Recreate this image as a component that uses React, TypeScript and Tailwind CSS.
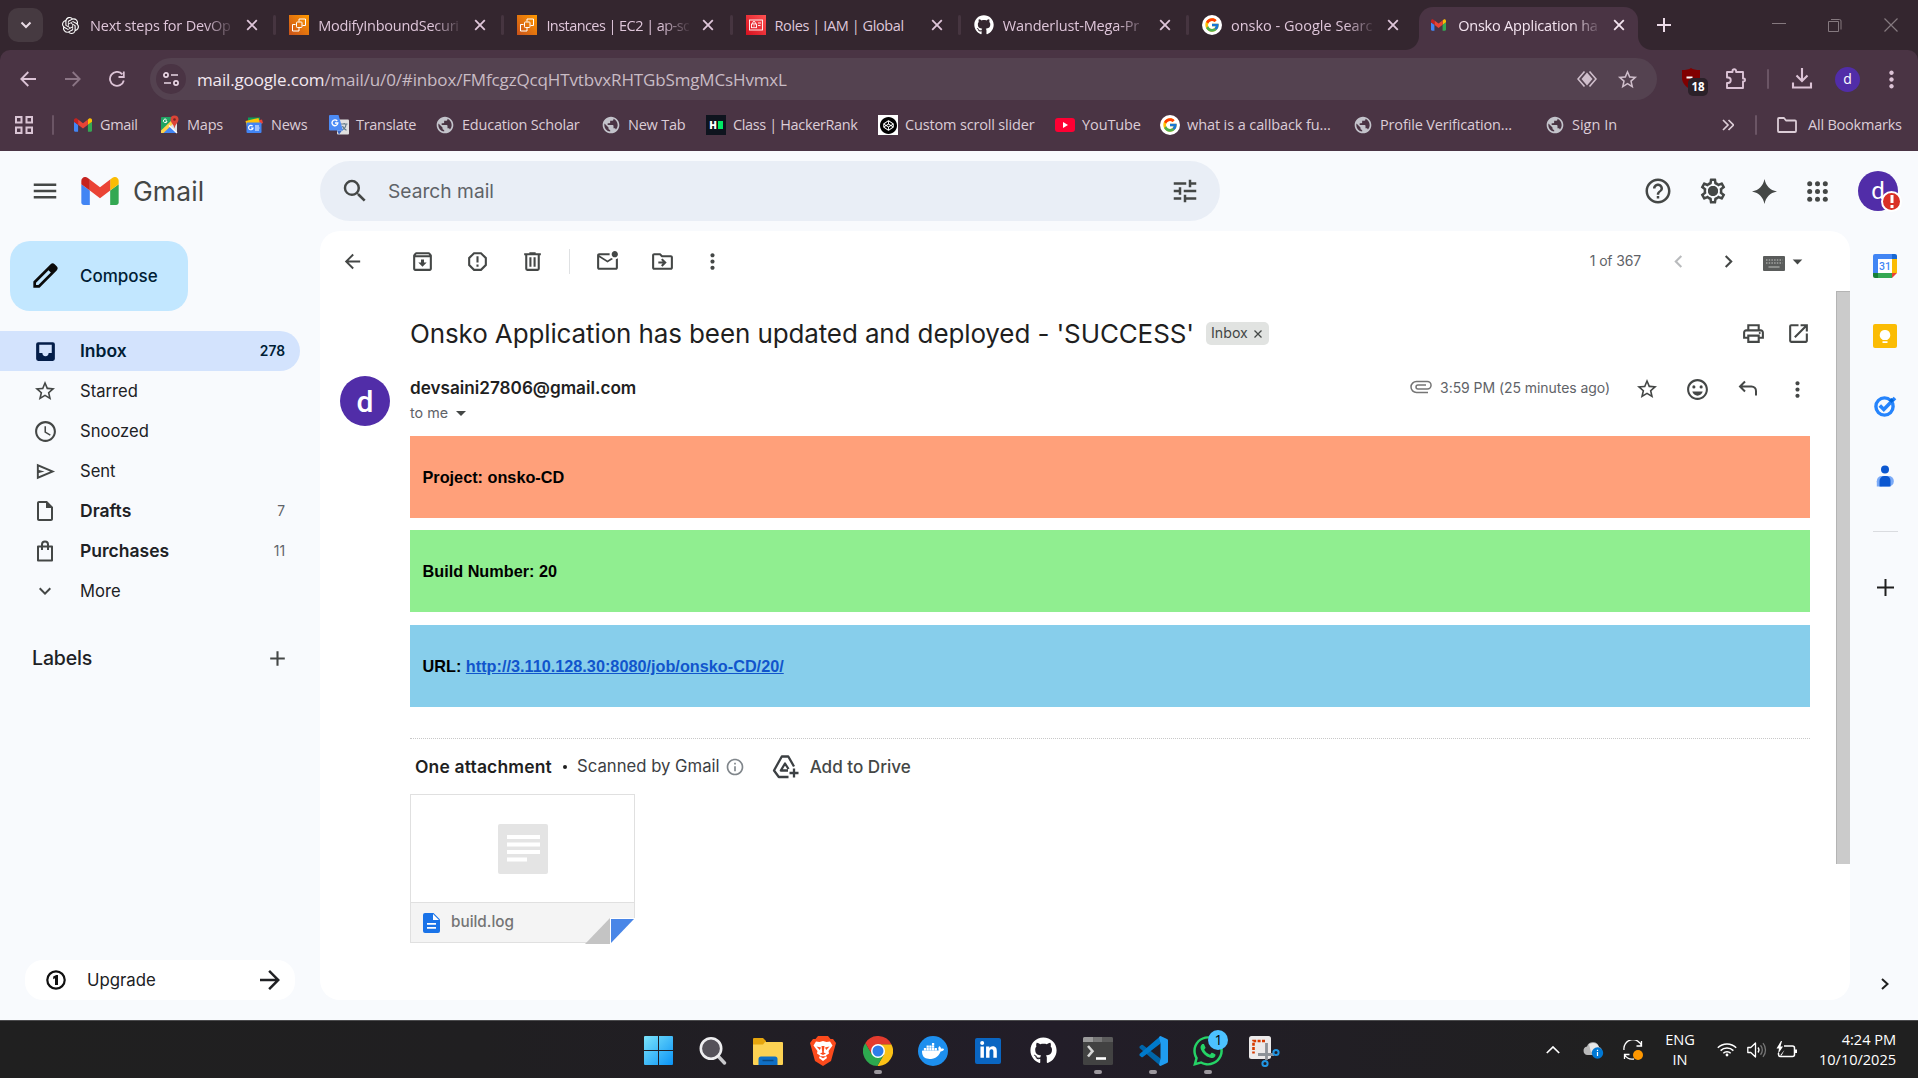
import React, { type ReactNode } from "react";
import { FcGoogle } from "react-icons/fc";
import { FaGithub, FaLinkedinIn, FaWhatsapp } from "react-icons/fa";
import { SiOpenai, SiCodepen, SiDocker } from "react-icons/si";
import {
  MdAccessTime, MdAdd, MdArrowBack, MdArrowDropDown, MdArrowForward, MdChevronLeft, MdChevronRight,
  MdExpandMore, MdHelpOutline, MdInfoOutline, MdMenu, MdMoreVert, MdOpenInNew,
  MdOutlineArchive, MdOutlineDriveFileMove, MdOutlineEmojiEmotions, MdOutlineInsertDriveFile,
  MdOutlineLocalPrintshop, MdOutlineMarkEmailUnread, MdOutlineSettings, MdPublic,
  MdReportGmailerrorred, MdSearch, MdStarOutline, MdTune,
} from "react-icons/md";

/* ---------- logos ---------- */

function GmailMark({ className }: { className?: string }) {
  return (
    <svg viewBox="52 42 88 66" className={className}>
      <path fill="#4285f4" d="M58 108h14V74L52 59v43c0 3.32 2.69 6 6 6" />
      <path fill="#34a853" d="M120 108h14c3.32 0 6-2.69 6-6V59l-20 15" />
      <path fill="#fbbc04" d="M120 48v26l20-15v-8c0-7.42-8.47-11.65-14.4-7.2" />
      <path fill="#ea4335" d="M72 74V48l24 18 24-18v26L96 92" />
      <path fill="#c5221f" d="M52 51v8l20 15V48l-5.6-4.2c-5.94-4.45-14.4-.22-14.4 7.2" />
    </svg>
  );
}

function ChromeMark({ className }: { className?: string }) {
  return (
    <svg viewBox="0 0 24 24" className={className}>
      <path fill="#fbc116" d="M12 6.5H22.67A12 12 0 0 1 11.43 24L16.76 14.75 12 12Z" />
      <path fill="#2da94f" d="M16.76 14.75 11.43 24A12 12 0 0 1 1.9 5.51L7.24 14.75 12 12Z" />
      <path fill="#e33b2e" d="M7.24 14.75 1.9 5.51A12 12 0 0 1 22.67 6.5H12V12Z" />
      <circle cx="12" cy="12" r="5.6" fill="#fff" />
      <circle cx="12" cy="12" r="4.4" fill="#2f7de9" />
    </svg>
  );
}

function Ec2Mark() {
  return (
    <svg viewBox="0 0 20 20" className="size-5">
      <defs>
        <linearGradient id="ec2" x1="0" y1="1" x2="1" y2="0">
          <stop offset="0" stopColor="#c8511b" />
          <stop offset="1" stopColor="#ff9900" />
        </linearGradient>
      </defs>
      <rect width="20" height="20" fill="url(#ec2)" />
      <g fill="none" stroke="#fff" strokeWidth="1">
        <rect x="7.5" y="7" width="5.5" height="5.5" rx=".8" />
        <path d="M10 6.5V4h6.5v6.5H13.5M6.5 9.5H3.500V16H10V13" />
      </g>
    </svg>
  );
}

function IamMark() {
  return (
    <svg viewBox="0 0 20 20" className="size-5">
      <defs>
        <linearGradient id="iam" x1="0" y1="1" x2="1" y2="0">
          <stop offset="0" stopColor="#d6101f" />
          <stop offset="1" stopColor="#ff5252" />
        </linearGradient>
      </defs>
      <rect width="20" height="20" fill="url(#iam)" />
      <g fill="none" stroke="#fff" strokeWidth=".9">
        <rect x="3.5" y="5" width="13" height="10" />
        <rect x="5.500" y="9" width="5" height="3.700" />
        <path d="M6.700 9V7.800a1.300 1.300 0 0 1 2.600 0V9M8 10.300v1.200M12 8h3M12 10.500h2.500" />
      </g>
    </svg>
  );
}

function GoogleDisc() {
  return (
    <span className="flex size-5 items-center justify-center rounded-full bg-white">
      <FcGoogle className="size-4" />
    </span>
  );
}

function MapsMark() {
  return (
    <svg viewBox="0 0 20 20" className="size-5">
      <rect x="1" y="2" width="16" height="16" rx="1" fill="#1fa463" />
      <path fill="#4285f4" d="M3 18 10 11l7 7Z" />
      <path fill="#dfe3e6" d="M17 6v12L9.500 10.500Z" />
      <path fill="#ffd04b" d="M1 15.500 14 3l2.500 2.500L3.500 18H1Z" />
      <path stroke="#fff" strokeWidth="1.200" d="M9 10.500 17 18" />
      <path fill="#db4437" d="M14.500.5a4 4 0 0 1 4 4c0 3-3.200 4.500-4 9-.8-4.500-4-6-4-9a4 4 0 0 1 4-4Z" />
      <circle cx="14.500" cy="4.500" r="1.300" fill="#7b231e" />
      <path fill="none" stroke="#fff" strokeWidth="1" d="M6.500 4.600A1.800 1.800 0 1 0 7 6H5.500" />
    </svg>
  );
}

function NewsMark() {
  return (
    <svg viewBox="0 0 20 20" className="size-5">
      <path fill="#0c9d58" d="M4 2.500h12V10H4Z" />
      <path fill="#ea4335" d="m11 6 7-1.500 1 3.500-6 3Z" />
      <path fill="#ffc107" d="m1.500 6 13-3 1.500 6-13 3Z" />
      <rect x="2.500" y="7.500" width="15" height="10.500" rx="1" fill="#4285f4" />
      <path fill="none" stroke="#fff" strokeWidth="1.200" d="M8.600 11.200A2.200 2.200 0 1 0 9 13H7M11 11h4M11 13h4.500M11 15h4" />
    </svg>
  );
}

function TranslateMark() {
  return (
    <svg viewBox="0 0 20 20" className="size-5">
      <rect x="8" y="4.500" width="12" height="15" rx="1" fill="#e0e0e0" />
      <path fill="none" stroke="#607988" strokeWidth="1.200" d="M12 9h6.500M15.200 8v1.500M17 9c0 3-2 5-4 6M13.500 11c.5 2 2.500 3.500 4 4.200" />
      <path fill="#3a66c4" d="m8 15.500 5 0L10 19.500Z" />
      <path fill="#4c8bf5" d="M1 0h8.500L14 15.500H1A1 1 0 0 1 0 14.500V1A1 1 0 0 1 1 0Z" />
      <path fill="none" stroke="#fff" strokeWidth="1.400" d="M8.200 6A2.900 2.900 0 1 0 8.800 8H6" />
    </svg>
  );
}

function HackerRankMark() {
  return (
    <span className="flex size-5 items-center justify-center gap-px bg-[#0e141e] font-['Open_Sans',sans-serif] text-[10px] leading-none font-extrabold text-white">
      H<span className="h-2 w-[5px] bg-[#00ea64]" />
    </span>
  );
}

function CodepenMark() {
  return (
    <span className="flex size-5 items-center justify-center bg-white text-black">
      <SiCodepen className="size-[17px]" />
    </span>
  );
}

function YouTubeMark() {
  return (
    <svg viewBox="0 0 20 14" className="h-[14px] w-5">
      <rect width="20" height="14" rx="3" fill="#ff0033" />
      <path fill="#fff" d="m8 4 5 3-5 3Z" />
    </svg>
  );
}

/* ---------- browser chrome ---------- */

function Cross({ className }: { className?: string }) {
  return (
    <svg viewBox="0 0 20 20" className={className} fill="none" stroke="currentColor" strokeWidth="1.800">
      <path d="m5.200 5.200 9.600 9.600M14.800 5.200l-9.600 9.600" />
    </svg>
  );
}

type TabInfo = { icon: ReactNode; title: ReactNode; fade?: boolean };

const tabs: TabInfo[] = [
  { icon: <SiOpenai className="size-[17px] -translate-x-px text-white" />, title: <span className="tracking-[-0.2px]">Next steps for DevOp</span>, fade: true },
  { icon: <Ec2Mark />, title: <span className="tracking-[-0.24px]">ModifyInboundSecuri</span>, fade: true },
  { icon: <Ec2Mark />, title: <span className="tracking-[-0.56px]">Instances | EC2 | ap-so</span>, fade: true },
  { icon: <IamMark />, title: <span className="tracking-[-0.4px]">Roles | IAM | Global</span> },
  { icon: <FaGithub className="size-5 text-white" />, title: <span className="tracking-[-0.15px]">Wanderlust-Mega-Pr</span>, fade: true },
  { icon: <GoogleDisc />, title: <span className="tracking-[0px]">onsko - Google Searc</span>, fade: true },
];

const fadeMask = "[mask-image:linear-gradient(to_right,#000_80%,transparent_102%)]";

function TabStrip() {
  return (
    <div className="flex h-[50px] bg-[#34262f] text-[14.5px] text-[#dfc6da]">
      <div className="mt-2 ml-2 flex h-[34px] w-[35px] items-center justify-center rounded-[10px] bg-[#463a41]">
        <svg viewBox="0 0 12 12" className="size-3" fill="none" stroke="#e9dbe5" strokeWidth="2"><path d="m1.500 3.500 4.500 4.500 4.500-4.500" /></svg>
      </div>
      <div className="ml-1 flex">
        {tabs.map((t, i) => (
          <div key={i} className="flex h-[50px] w-[228.200px] items-center pl-[14px]">
            <span className="flex w-5 shrink-0 justify-center">{t.icon}</span>
            <span className={`ml-[9px] w-[143px] shrink-0 pt-[1px] whitespace-nowrap ${t.fade ? fadeMask : ""}`}>{t.title}</span>
            <Cross className="ml-[9px] size-5 shrink-0" />
            {i < 5 && <span className="ml-auto h-5 w-[3px] translate-x-[1px] rounded-full bg-[#463540]" />}
          </div>
        ))}
      </div>
      <div className="relative mt-[7px] ml-[3px] flex h-[43px] w-[219px] shrink-0 items-center rounded-t-[14px] bg-[#4a3444] pb-[7px] text-[#f4e4f0]">
        <span className="absolute bottom-0 -left-[14px] size-[14px] bg-[radial-gradient(circle_at_0_0,#34262f_13.5px,#4a3444_14.5px)]" />
        <span className="absolute -right-[14px] bottom-0 size-[14px] bg-[radial-gradient(circle_at_100%_0,#34262f_13.5px,#4a3444_14.5px)]" />
        <GmailMark className="ml-[12px] h-[12px] w-[15px]" />
        <span className={`ml-[12px] w-[142px] pt-[1px] tracking-[-0.2px] whitespace-nowrap ${fadeMask}`}>Onsko Application ha</span>
        <Cross className="ml-[9px] size-5" />
      </div>
      <svg viewBox="0 0 14 14" className="mt-[18px] ml-[19px] size-[14px]" fill="none" stroke="#eddbe8" strokeWidth="2"><path d="M7 0v14M0 7h14" /></svg>
      <div className="mr-[20px] ml-auto flex items-center gap-[42px] text-[#85797f]">
        <svg viewBox="0 0 14 14" className="size-[14px]" fill="none" stroke="currentColor"><path d="M0 5.500h14" /></svg>
        <svg viewBox="0 0 14 14" className="size-[14px]" fill="none" stroke="currentColor"><path d="M.5 3.500h10v10H.5zM3 1.500h8.500a1.500 1.500 0 0 1 1.500 1.500v8.500" /></svg>
        <svg viewBox="0 0 14 14" className="size-[14px]" fill="none" stroke="currentColor" strokeWidth="1.200"><path d="m.5.5 13 13M13.500.5l-13 13" /></svg>
      </div>
    </div>
  );
}

function AddressBar() {
  return (
    <div className="flex h-[58px] items-center text-[#dcc3d6]">
      <svg viewBox="0 0 16 16" className="ml-[20px] size-4" fill="none" stroke="currentColor" strokeWidth="1.800"><path d="M16 8H1.500M8.300 1 1.300 8l7 7" /></svg>
      <svg viewBox="0 0 16 16" className="ml-[29px] size-4 text-[#8b7585]" fill="none" stroke="currentColor" strokeWidth="1.800"><path d="M0 8h14.500M7.700 1l7 7-7 7" /></svg>
      <svg viewBox="0 0 16 16" className="ml-[28px] size-4" fill="none" stroke="currentColor" strokeWidth="1.800"><path d="M14.800 9.500A7 7 0 1 1 13.300 3.300M14.800.5v5.500H9.500" /></svg>
      <div className="ml-[25px] flex h-[42px] w-[1507px] items-center rounded-full bg-[#544250]">
        <span className="ml-[6px] flex size-[30px] items-center justify-center rounded-full bg-[#4a3444]">
          <svg viewBox="0 0 16 16" className="size-4" fill="none" stroke="#e8d5e3" strokeWidth="1.700">
            <circle cx="3" cy="4" r="2.100" /><path d="M8 4h7M1 12h7" /><circle cx="13" cy="12" r="2.100" />
          </svg>
        </span>
        <span className="ml-[11px] pt-[1px] text-[17px] tracking-[-0.145px] whitespace-nowrap text-[#c9bcc5]">
          <span className="text-[#f3e9f0]">mail.google.com</span>/mail/u/0/#inbox/FMfcgzQcqHTvtbvxRHTGbSmgMCsHvmxL
        </span>
        <svg viewBox="0 0 20 16" className="mr-[19px] ml-auto h-4 w-5" fill="none" stroke="#cfbecb" strokeWidth="1.600">
          <path d="M7.500.5 1 8l6.500 7.500M12.500.5 19 8l-6.500 7.500" /><path fill="#cfbecb" stroke="none" d="m10 1.500 5.500 6.500-5.500 6.500L4.500 8Z" />
        </svg>
        <MdStarOutline className="mr-[18px] size-[23px] text-[#cfbecb]" />
      </div>
      <div className="relative ml-[24px] h-[22px] w-5">
        <svg viewBox="0 0 20 22" className="h-[22px] w-5"><path fill="#800000" d="M10 0c2 1.500 5 2 9 2v8c0 5-4 9-9 12-5-3-9-7-9-12V2c4 0 7-.5 9-2Z" /><path fill="#fff" d="M5.500 8.500h6v2h-6z" /></svg>
        <span className="absolute top-[10px] left-[7px] flex h-[18px] w-5 items-center justify-center rounded-[5px] bg-[#2b2129] text-[11.500px] font-bold text-white">18</span>
      </div>
      <svg viewBox="0 0 22 22" className="ml-[24px] size-[22px]" fill="none" stroke="currentColor" strokeWidth="1.900">
        <path strokeLinejoin="round" d="M2 4h5.500V3a1.800 1.800 0 0 1 3.600 0v1H18v6.500h.6a1.500 1.500 0 0 1 0 3H18V20H2v-5h1a2.700 2.700 0 0 0 0-5.500H2Z" />
      </svg>
      <span className="ml-[20px] h-5 w-[2px] rounded bg-[#6b5565]" />
      <svg viewBox="0 0 22 22" className="ml-[22px] size-[22px]" fill="none" stroke="currentColor" strokeWidth="2.100"><path d="M11 0v13M5.500 7.500 11 13l5.500-5.500M2 14.500v5h18v-5" /></svg>
      <span className="ml-[22px] flex size-[25px] items-center justify-center rounded-full bg-[#512da8] pb-px text-[14px] text-white">d</span>
      <MdMoreVert className="ml-[18px] size-[27px]" />
    </div>
  );
}

const Globe = () => <MdPublic className="size-[22px] text-[#c3c3cb]" />;

function Bookmark({ icon, label, className }: { icon: ReactNode; label: string; className: string }) {
  return (
    <div className={`flex shrink-0 items-center gap-[7px] whitespace-nowrap ${className}`}>
      <span className="flex w-5 shrink-0 justify-center">{icon}</span>
      {label}
    </div>
  );
}

function BookmarksBar() {
  return (
    <div className="flex h-[34px] items-center text-[14.500px] tracking-[-0.22px] text-[#dccdd7]">
      <svg viewBox="0 0 20 20" className="ml-[14px] size-5" fill="none" stroke="#d9c4d4" strokeWidth="2"><path d="M2 2h5.500v5.500H2zM12.500 2H18v5.500h-5.500zM2 12.500h5.500V18H2zM12.500 12.500H18V18h-5.500z" /></svg>
      <span className="ml-[18px] h-5 w-[2px] rounded bg-[#6b5565]" />
      <Bookmark className="ml-[19px] w-[87px] tracking-[-0.35px]" icon={<GmailMark className="h-[14px] w-[18px]" />} label="Gmail" />
      <Bookmark className="w-[84px]" icon={<MapsMark />} label="Maps" />
      <Bookmark className="w-[85px]" icon={<NewsMark />} label="News" />
      <Bookmark className="w-[106px] tracking-[-0.3px]" icon={<TranslateMark />} label="Translate" />
      <Bookmark className="w-[166px]" icon={<Globe />} label="Education Scholar" />
      <Bookmark className="w-[105px]" icon={<Globe />} label="New Tab" />
      <Bookmark className="w-[172px] tracking-[-0.36px]" icon={<HackerRankMark />} label="Class | HackerRank" />
      <Bookmark className="w-[177px] tracking-[-0.16px]" icon={<CodepenMark />} label="Custom scroll slider" />
      <Bookmark className="w-[105px] tracking-[-0.1px]" icon={<YouTubeMark />} label="YouTube" />
      <Bookmark className="w-[193px] tracking-[-0.1px]" icon={<GoogleDisc />} label="what is a callback fu..." />
      <Bookmark className="w-[192px] tracking-[-0.15px]" icon={<Globe />} label="Profile Verification..." />
      <Bookmark className="w-[177px] tracking-[0px]" icon={<Globe />} label="Sign In" />
      <svg viewBox="0 0 12 12" className="size-3" fill="none" stroke="#dccdd7" strokeWidth="1.700"><path d="m1 1 5 5-5 5M6.500 1l5 5-5 5" /></svg>
      <span className="ml-[21px] h-5 w-[2px] rounded bg-[#6b5565]" />
      <svg viewBox="0 0 20 16" className="ml-[20px] h-4 w-5" fill="none" stroke="#dccdd7" strokeWidth="1.800"><path strokeLinejoin="round" d="M1 14V2a1 1 0 0 1 1-1h5l2 2.500h9a1 1 0 0 1 1 1V14a1 1 0 0 1-1 1H2a1 1 0 0 1-1-1Z" /></svg>
      <span className="ml-[11px]">All Bookmarks</span>
    </div>
  );
}

/* ---------- Gmail ---------- */

function Header() {
  return (
    <div className="flex h-[80px] items-center text-[#444746]">
      <MdMenu className="ml-[30px] size-[30px]" />
      <GmailMark className="ml-[21px] h-[28px] w-[38px]" />
      <span className="ml-[14px] w-[187px] pt-[1px] text-[26.500px] tracking-[0.100px]">Gmail</span>
      <div className="flex h-[60px] w-[900px] items-center rounded-full bg-[#e9eef6]">
        <MdSearch className="ml-[20px] size-[30px]" />
        <span className="ml-[18px] text-[19.200px] text-[#5f6368]">Search mail</span>
        <MdTune className="mr-[20px] ml-auto size-[30px]" />
      </div>
      <MdHelpOutline className="ml-[423px] size-[30px]" />
      <span className="relative ml-[25px] size-[30px]">
        <MdOutlineSettings className="size-[30px]" />
        <span className="absolute top-[10px] left-[10px] size-[10px] rounded-full bg-[#444746]" />
      </span>
      <svg viewBox="0 0 24 24" className="ml-[24px] size-[25px]" fill="currentColor"><path d="M12 0c1.400 6.600 5 10.600 12 12-7 1.400-10.600 5.400-12 12C10.600 17.400 7 13.400 0 12 7 10.600 10.600 6.600 12 0Z" /></svg>
      <svg viewBox="0 0 21 21" className="ml-[30px] size-[21px]" fill="currentColor">
        {[2.700, 10.500, 18.300].map((y) => [2.700, 10.500, 18.300].map((x) => <circle key={`${x}-${y}`} cx={x} cy={y} r="2.500" />))}
      </svg>
      <div className="relative ml-[30px] flex size-10 items-center justify-center rounded-full bg-[#512da8] font-['Roboto',sans-serif] text-[24px] text-white">
        d
        <span className="absolute top-[20px] left-[23px] flex size-[21px] items-center justify-center rounded-full border-2 border-white bg-[#d93025]">
          <svg viewBox="0 0 4 13" className="h-[13px] w-1" fill="#fff"><path d="M.5 0h3v8h-3zM.5 10h3v3h-3z" /></svg>
        </span>
      </div>
    </div>
  );
}

const InboxIcon = () => <svg viewBox="0 0 24 24" className="size-[25px]" fill="currentColor" fillRule="evenodd"><path d="M5 3h14a2 2 0 0 1 2 2v14a2 2 0 0 1-2 2H5a2 2 0 0 1-2-2V5a2 2 0 0 1 2-2ZM6 5.500V13.500h3a3 3 0 0 0 6 0h3V5.500Z" /></svg>;
const SendIcon = () => <svg viewBox="0 0 24 24" className="size-[23px]" fill="currentColor"><path d="M3 20V4l19 8-19 8Zm2-3 11.850-5L5 7v3.500l6 1.500-6 1.500V17Z" /></svg>;
const BagIcon = () => <svg viewBox="0 0 24 24" className="size-6" fill="none" stroke="currentColor" strokeWidth="2"><path strokeLinejoin="round" d="M5 7.500h14v14H5z" /><path d="M9 11V5.500a3 3 0 0 1 6 0V11" /></svg>;

const folders: { icon: ReactNode; label: string; count?: string; kind: "active" | "bold" | "plain" }[] = [
  { icon: <InboxIcon />, label: "Inbox", count: "278", kind: "active" },
  { icon: <MdStarOutline className="size-6" />, label: "Starred", kind: "plain" },
  { icon: <MdAccessTime className="size-[25px]" />, label: "Snoozed", kind: "plain" },
  { icon: <SendIcon />, label: "Sent", kind: "plain" },
  { icon: <MdOutlineInsertDriveFile className="size-6" />, label: "Drafts", count: "7", kind: "bold" },
  { icon: <BagIcon />, label: "Purchases", count: "11", kind: "bold" },
  { icon: <MdExpandMore className="size-6" />, label: "More", kind: "plain" },
];

const rowStyle = {
  active: "bg-[#d3e3fd] text-[17.500px] font-semibold text-[#001d35]",
  bold: "text-[17.500px] font-semibold text-[#202124]",
  plain: "text-[16.600px] text-[#202124]",
};

function Sidebar() {
  return (
    <div className="flex w-[320px] shrink-0 flex-col">
      <div className="mt-[10px] ml-[10px] flex h-[70px] w-[178px] items-center rounded-[20px] bg-[#c2e7ff] text-[17px] font-medium text-[#001d35]">
        <svg viewBox="0 0 24 24" className="ml-[21px] size-7" fill="#0b0b0b"><path d="M2 22v-5.300L16.800 2a2.500 2.500 0 0 1 3.500 0L22 3.700a2.500 2.500 0 0 1 0 3.500L7.300 22Zm2.300-2.300h2L17 9 15 7 4.300 17.700Z" /></svg>
        <span className="ml-[21px] pt-[2px]">Compose</span>
      </div>
      <div className="mt-[20px] w-[300px]">
        {folders.map((f) => (
          <div key={f.label} className={`flex h-10 items-center rounded-r-full ${rowStyle[f.kind]}`}>
            <span className={`ml-[32px] flex w-[26px] justify-center ${f.kind === "active" ? "text-[#041e49]" : "text-[#444746]"}`}>{f.icon}</span>
            <span className="ml-[22px]">{f.label}</span>
            {f.count && <span className={`mr-[15px] ml-auto text-[13.800px] ${f.kind === "active" ? "" : "font-normal text-[#5f6368]"}`}>{f.count}</span>}
          </div>
        ))}
      </div>
      <div className="mt-[34px] flex h-[26px] w-[320px] items-center">
        <span className="ml-[32px] pt-[1px] text-[19.500px] font-medium tracking-[-0.15px] text-[#202124]">Labels</span>
        <MdAdd className="mr-[30px] ml-auto size-[25px] text-[#444746]" />
      </div>
      <div className="mt-auto mb-[20px] ml-[25px] flex h-10 w-[270px] items-center rounded-[18px] bg-white text-[#202124]">
        <svg viewBox="0 0 20 20" className="ml-[21px] size-5"><circle cx="10" cy="10" r="8.700" fill="none" stroke="#111" strokeWidth="2.200" /><path fill="#111" d="M9 15V8.200L7.200 9.200V6.600L10.200 5h1.800v10Z" /></svg>
        <span className="ml-[21px] pt-[1px] text-[16.800px]">Upgrade</span>
        <MdArrowForward className="mr-[10px] ml-auto size-[30px]" />
      </div>
    </div>
  );
}

function MailToolbar() {
  const cell = "flex w-[55px] justify-center";
  return (
    <div className="flex h-[60px] items-center text-[#444746]">
      <span className="flex w-[65px] justify-center"><MdArrowBack className="size-[23px]" /></span>
      <span className={`ml-[10px] ${cell}`}><MdOutlineArchive className="size-[25px]" /></span>
      <span className={cell}><MdReportGmailerrorred className="size-[25px]" /></span>
      <span className={cell}>
        <svg viewBox="0 0 24 24" className="size-[25px]" fill="currentColor"><path d="M15 4V3H9v1H4v2h1v13a2 2 0 0 0 2 2h10a2 2 0 0 0 2-2V6h1V4h-5Zm2 15H7V6h10v13ZM9 8h2v9H9Zm4 0h2v9h-2Z" /></svg>
      </span>
      <span className="ml-[9px] h-[25px] w-px bg-[#dfe1e3]" />
      <span className={`ml-[10px] ${cell}`}><MdOutlineMarkEmailUnread className="size-[25px]" /></span>
      <span className={cell}><MdOutlineDriveFileMove className="size-[25px]" /></span>
      <span className="flex w-[45px] justify-center"><MdMoreVert className="size-[25px]" /></span>
      <span className="ml-auto pb-[2px] text-[14px] tracking-[-0.15px] text-[#5f6368]">1 of 367</span>
      <span className="ml-[12px] flex w-[50px] justify-center text-[#b9bbbd]"><MdChevronLeft className="size-[25px]" /></span>
      <span className="flex w-[50px] justify-center"><MdChevronRight className="size-[25px]" /></span>
      <svg viewBox="0 0 22 15" className="mt-[4px] ml-[10px] h-[15px] w-[22px]">
        <rect width="22" height="15" rx="1" fill="#5a5c5b" />
        <path stroke="#a3a4a3" strokeWidth="1.300" strokeDasharray="1.500 1.200" d="M3 4h16.500M3 7h16.500" />
        <path stroke="#a3a4a3" strokeWidth="1.400" d="M5.500 11h11" />
      </svg>
      <MdArrowDropDown className="mr-[41px] ml-[1px] size-[23px]" />
    </div>
  );
}

const Block = ({ className, children }: { className: string; children: ReactNode }) => (
  <div className={`flex h-[82px] items-center pl-[12.500px] font-['Liberation_Sans',sans-serif] text-[16.250px] font-bold text-black ${className}`}>{children}</div>
);

function Attachment() {
  return (
    <div className="relative mt-[13px] flex h-[149px] w-[225px] flex-col border border-[#e0e0e0] bg-white">
      <div className="flex h-[107px] items-center justify-center">
        <svg viewBox="0 0 50 50" className="size-[50px]">
          <rect width="50" height="50" rx="2" fill="#e4e4e4" />
          <path fill="#fff" d="M9 11h33v4H9zM9 18.500h33v4H9zM9 26h33v4H9zM9 33.500h20v4H9z" />
        </svg>
      </div>
      <div className="flex h-10 items-center border-t border-[#e0e0e0] bg-[#f4f4f4]">
        <svg viewBox="0 0 17 20" className="ml-[12px] h-5 w-[17px]">
          <path fill="#1a73e8" d="M2 0h8.500L17 6.500V18a2 2 0 0 1-2 2H2a2 2 0 0 1-2-2V2a2 2 0 0 1 2-2Z" />
          <path fill="#fff" d="M10 1v6h6ZM4 10h9v1.800H4zM4 14h9v1.800H4z" />
        </svg>
        <span className="ml-[11px] text-[15.300px] font-medium text-[#757575]">build.log</span>
      </div>
      <svg viewBox="0 0 50 26" className="absolute -right-px -bottom-[2px] h-[26px] w-[50px]">
        <path fill="#fff" d="M25 0h25v26H25Z" />
        <path fill="#c4c4c4" d="M25 0v26H0Z" />
        <path fill="#4986e7" d="M26 1h23L26 25Z" />
      </svg>
    </div>
  );
}

function MailPane() {
  return (
    <div className="flex w-[1530px] flex-col overflow-hidden rounded-[20px] bg-white">
      <MailToolbar />
      <div className="flex flex-1">
        <div className="w-[1516px]">
          <div className="flex h-[85px] items-center">
            <h1 className="ml-[90px] w-[784px] text-[26px] tracking-[-0.120px] whitespace-nowrap text-[#1f1f1f]">Onsko Application has been updated and deployed - 'SUCCESS'</h1>
            <span className="ml-[12px] flex h-[23px] w-[63px] items-center rounded-[5px] bg-[#e1e3e1] pb-px pl-[5px] text-[14.200px] text-[#444746]">
              Inbox
              <svg viewBox="0 0 8 8" className="mt-[2px] ml-[6px] size-2" fill="none" stroke="currentColor" strokeWidth="1.300"><path d="m.5.5 7 7M7.500.5l-7 7" /></svg>
            </span>
            <MdOutlineLocalPrintshop className="ml-auto size-[25px] text-[#444746]" />
            <MdOpenInNew className="mr-[25px] ml-[20px] size-[25px] text-[#444746]" />
          </div>
          <div className="flex h-[60px] w-[1516px]">
            <span className="ml-[20px] flex size-[50px] items-center justify-center rounded-full bg-[#512da8] font-['Roboto',sans-serif] text-[30px] font-medium text-white">d</span>
            <div className="ml-[20px]">
              <div className="flex h-[24px] items-center text-[17.150px] font-semibold text-[#1f1f1f]">devsaini27806@gmail.com</div>
              <div className="flex h-[26px] items-center text-[14.300px] text-[#5f6368]">to me <MdArrowDropDown className="ml-[1px] size-[24px] text-[#444746]" /></div>
            </div>
            <div className="ml-auto flex h-[26px] items-center text-[#444746]">
              <svg viewBox="0 0 22 14" className="mb-[4px] h-[14px] w-[22px]" fill="none" stroke="#757575" strokeWidth="1.500"><path d="M18 12.500H6.500a5.500 5.500 0 0 1 0-11h10.800a3.700 3.700 0 0 1 0 7.500H8a1.900 1.900 0 0 1 0-4h8" /></svg>
              <span className="ml-[8px] pb-[3px] text-[14px] tracking-[-0.060px] text-[#5f6368]">3:59 PM (25 minutes ago)</span>
              <MdStarOutline className="ml-[25px] size-[24px]" />
              <MdOutlineEmojiEmotions className="ml-[26px] size-[25px]" />
              <svg viewBox="0 0 24 24" className="ml-[26px] size-[24px]" fill="none" stroke="currentColor" strokeWidth="2"><path d="M9 4.500 4 9.500l5 5M4 9.500h11.500a4.500 4.500 0 0 1 4.500 4.500v4.500" /></svg>
              <MdMoreVert className="mr-[26px] ml-[25px] size-[25px]" />
            </div>
          </div>
          <div className="ml-[90px] w-[1400px]">
            <Block className="bg-[#ffa07a]">Project: onsko-CD</Block>
            <Block className="mt-[12px] bg-[#90ee90]">Build Number: 20</Block>
            <Block className="mt-[13px] bg-[#87ceeb]">URL:&nbsp;<a className="text-[#1155cc] underline">http://3.110.128.30:8080/job/onsko-CD/20/</a></Block>
            <div className="mt-[31px] border-t border-dotted border-[#c8c8c8]" />
            <div className="mt-[14px] flex h-[28px] items-center text-[#1f1f1f]">
              <span className="ml-[5px] w-[138px] text-[17.500px] font-semibold tracking-[0.150px] whitespace-nowrap">One attachment</span>
              <span className="mr-[10px] ml-[10px] size-1 rounded-full bg-[#1f1f1f]" />
              <span className="text-[16.700px] text-[#3c4043]">Scanned by Gmail</span>
              <MdInfoOutline className="ml-[5px] size-5 text-[#80868b]" />
              <svg viewBox="0 0 28 26" className="ml-[27px] h-[26px] w-7" fill="none" stroke="#3c4043" strokeWidth="2.300">
                <path strokeLinejoin="round" d="M16.500 23H6.800L2 16.500 9.800 2.500h6.500L22 12.500M16 16.500H8.800L13 9.500l3.500 5.500" />
                <path d="M22 14.500v9M17.500 19h9" />
              </svg>
              <span className="ml-[10px] text-[17.100px] font-medium text-[#444746]">Add to Drive</span>
            </div>
            <Attachment />
          </div>
        </div>
        <div className="h-[573px] w-[14px] border-t border-l border-[#b4b4b4] bg-[#cbcbcb]" />
      </div>
    </div>
  );
}

function SidePanel() {
  return (
    <div className="flex flex-1 flex-col items-center pl-[2px]">
      <svg viewBox="0 0 24 24" className="mt-[23px] size-6">
        <path fill="#fff" d="M5 5h14v14H5z" />
        <path fill="#4285f4" d="M2 0h17v5H5v14H0V2a2 2 0 0 1 2-2Z" />
        <path fill="#1967d2" d="M19 0h3a2 2 0 0 1 2 2v3h-5Z" />
        <path fill="#fbbc04" d="M19 5h5v14h-5Z" />
        <path fill="#34a853" d="M5 19h14v5H5Z" />
        <path fill="#188038" d="M0 19h5v5H2a2 2 0 0 1-2-2Z" />
        <path fill="#ea4335" d="M19 19h5l-5 5Z" />
        <text x="12" y="15.800" textAnchor="middle" fontSize="10.500" fontWeight="500" fontFamily="Roboto, sans-serif" fill="#4285f4">31</text>
      </svg>
      <svg viewBox="0 0 24 24" className="mt-[46px] size-6">
        <rect width="24" height="24" rx="2" fill="#fbbc04" />
        <path fill="#fff" d="M12 6a5 5 0 0 1 2.600 9.400V16H9.400v-.6A5 5 0 0 1 12 6ZM9.500 17.200h5V19h-5Z" />
      </svg>
      <svg viewBox="0 0 24 24" className="mt-[46px] size-6">
        <circle cx="11.500" cy="12.500" r="8.600" fill="none" stroke="#2684fc" strokeWidth="3.400" />
        <path fill="none" stroke="#2684fc" strokeWidth="3.600" d="m6.800 11.500 4 4L22 4" />
        <path fill="#0066da" d="m16 6.500 2.500-2.500 2.500 2.500-2.500 2.500Z" />
      </svg>
      <svg viewBox="0 0 24 24" className="mt-[46px] size-6">
        <circle cx="12" cy="5.500" r="4" fill="#0b57d0" />
        <rect x="3.800" y="12" width="17" height="10.500" rx="5" fill="#7baaf7" />
        <path fill="#7baaf7" d="M3.800 17h5v5.500h-5Z" />
        <path fill="#0b57d0" d="M6.500 22.500V17a5 5 0 0 1 5-5h1.500a4.500 4.500 0 0 1 4.500 4.500v6Z" />
      </svg>
      <span className="mt-[43px] h-px w-[25px] bg-[#dadce0]" />
      <svg viewBox="0 0 17 17" className="mt-[47px] size-[17px]" fill="none" stroke="#1f1f1f" strokeWidth="2"><path d="M8.500 0v17M0 8.500h17" /></svg>
      <svg viewBox="0 0 8 12" className="mt-auto mb-[10px] h-3 w-2" fill="none" stroke="#1f1f1f" strokeWidth="2"><path d="m1 1 5.500 5L1 11" /></svg>
    </div>
  );
}

/* ---------- taskbar ---------- */

const WindowsMark = () => (
  <svg viewBox="0 0 29 29" className="size-[29px]">
    <defs><linearGradient id="win" x1="0" y1="0" x2="1" y2="1"><stop offset="0" stopColor="#7be4fb" /><stop offset="1" stopColor="#0a93f5" /></linearGradient></defs>
    <path fill="url(#win)" d="M1 0h13v14H0V1a1 1 0 0 1 1-1ZM15 0h13a1 1 0 0 1 1 1v13H15ZM0 15h14v14H1a1 1 0 0 1-1-1ZM15 15h14v13a1 1 0 0 1-1 1H15Z" />
  </svg>
);

const SearchMark = () => (
  <svg viewBox="0 0 28 28" className="size-7">
    <path stroke="#c9c9cc" strokeWidth="3.400" strokeLinecap="round" d="m19 19 6.500 7" />
    <circle cx="12" cy="11.500" r="10.200" fill="#55525a" stroke="#eeeef0" strokeWidth="2.600" />
  </svg>
);

const FolderMark = () => (
  <svg viewBox="0 0 30 28" className="h-7 w-[30px]">
    <path fill="#e5a50e" d="M1 1h9l3 3v6H0V2a1 1 0 0 1 1-1Z" />
    <path fill="#fcd253" d="M12 5h17a1 1 0 0 1 1 1v21a1 1 0 0 1-1 1H1a1 1 0 0 1-1-1V7.500h10Z" />
    <path fill="#0f6fc5" d="M8 19.500h14a2.500 2.500 0 0 1 2.500 2.500v6h-19v-6A2.500 2.500 0 0 1 8 19.500Z" />
    <path stroke="#0a4880" strokeWidth="1.500" d="M9.500 23.500h11" />
  </svg>
);

const BraveMark = () => (
  <svg viewBox="0 0 26 30" className="h-[30px] w-[26px]">
    <path fill="#fb4a1c" d="M8 0h10l2.500 3H23l3 4-1 3.500-4 14.500-8 5-8-5L1 10.500 0 7l3-4h2.500Z" />
    <path fill="#fff" d="m13 5 3.500 1 3.500-.5 2.500 4L18.500 15l.5 2.500-3 2 1 2.500-4 3-4-3 1-2.500-3-2 .5-2.500-4-5.500 2.500-4 3.500.5Z" />
    <path fill="#fb4a1c" d="m6.500 10.500 4.500 1-1.200 2.500ZM19.500 10.500l-4.500 1 1.200 2.500ZM11.500 10h3l-.8 6.500 2.300 1-3 1.500-3-1.500 2.300-1ZM9.500 20.300h7L13 22.300Z" />
  </svg>
);

const TerminalMark = () => (
  <svg viewBox="0 0 30 28" className="h-7 w-[30px]">
    <rect width="30" height="28" rx="1.500" fill="#424242" />
    <path fill="#9a9a9a" d="M1.500 0h9v5H0V1.500A1.500 1.500 0 0 1 1.500 0Z" />
    <path fill="#777" d="M10.500 0h9v5h-9Z" />
    <path fill="#5c5c5c" d="M19.500 0h9A1.500 1.500 0 0 1 30 1.500V5H19.500Z" />
    <path fill="none" stroke="#d6d6d6" strokeWidth="2.600" d="m5 9 4.500 5.200L5 19.500" />
    <path stroke="#fff" strokeWidth="2.600" d="M13 21.500h10" />
  </svg>
);

const VscodeMark = () => (
  <svg viewBox="0 0 30 30" className="size-[30px]">
    <path fill="#0065a9" d="M1.500 10.500 3.300 9a1.200 1.200 0 0 1 1.600 0L22.500 22.500V30L1.500 12Z" />
    <path fill="#007acc" d="M1.500 19.500 3.300 21a1.200 1.200 0 0 0 1.600 0L22.500 7.500V0L1.500 18Z" />
    <path fill="#1f9cf0" d="M22.500 0 29 3a1.500 1.500 0 0 1 1 1.500v21a1.500 1.500 0 0 1-1 1.500l-6.500 3-1.500-1 1.500-6.500v-15L21 1Z" />
  </svg>
);

const SnipMark = () => (
  <svg viewBox="0 0 32 32" className="size-8">
    <rect x="1" y="1" width="22" height="23" rx="2.500" fill="#eceaea" />
    <path fill="none" stroke="#d83b01" strokeWidth="2.600" strokeDasharray="3 1.400" d="M17 6H5.500v12.500" />
    <path fill="none" stroke="#8d9298" strokeWidth="2.800" d="M18.500 8v17M10 19.500h16" />
    <circle cx="28" cy="17.500" r="2.600" fill="none" stroke="#2196e3" strokeWidth="2" />
    <circle cx="17" cy="28.500" r="2.600" fill="none" stroke="#2196e3" strokeWidth="2" />
  </svg>
);

const apps: { icon: ReactNode; open?: boolean }[] = [
  { icon: <WindowsMark /> },
  { icon: <SearchMark /> },
  { icon: <FolderMark /> },
  { icon: <BraveMark /> },
  { icon: <ChromeMark className="size-[30px]" />, open: true },
  { icon: <span className="flex size-[30px] items-center justify-center rounded-full bg-[#1d8fee] text-white"><SiDocker className="size-[22px]" /></span> },
  { icon: <span className="flex size-[26px] items-center justify-center rounded-[2px] bg-[#0a66c2] text-white"><FaLinkedinIn className="size-[19px]" /></span> },
  { icon: <FaGithub className="size-[27px] text-white" /> },
  { icon: <TerminalMark />, open: true },
  { icon: <VscodeMark />, open: true },
  {
    icon: (
      <span className="relative">
        <FaWhatsapp className="size-[34px] text-[#25d366]" />
        <span className="absolute -top-[4px] left-[17px] flex size-5 items-center justify-center rounded-full bg-[#4cc2ff] text-[14px] text-black">1</span>
      </span>
    ),
    open: true,
  },
  { icon: <SnipMark /> },
];

function Taskbar() {
  return (
    <div className="flex h-[58px] border-t border-[#4b4b4d] bg-[linear-gradient(to_right,#202020,#201f21_25%,#221d28_55%,#202020_85%)] text-[14.600px] text-white">
      <div className="ml-[630.500px] flex">
        {apps.map((a, i) => (
          <div key={i} className="flex w-[55.060px] flex-col items-center">
            <div className="flex h-[49px] items-center pt-[10px]">{a.icon}</div>
            {a.open && <span className="h-1 w-2 rounded-full bg-[#9c989e]" />}
          </div>
        ))}
      </div>
      <div className="mr-[22px] ml-auto flex h-[57px] items-center">
        <svg viewBox="0 0 14 8" className="h-2 w-[14px]" fill="none" stroke="#fff" strokeWidth="1.700"><path d="m.8 7 6.200-6 6.200 6" /></svg>
        <svg viewBox="0 0 21 18" className="ml-[23px] h-[18px] w-[21px]">
          <path fill="#b9b9b9" d="M4.500 14A4.300 4.300 0 0 1 4 5.500 6.300 6.300 0 0 1 16 6a4.200 4.200 0 0 1 0 8Z" />
          <path fill="#e8e8e8" d="M6 3.500A6.300 6.300 0 0 1 16 6L8 11Z" />
          <circle cx="14.500" cy="12" r="5.700" fill="#0078d4" />
          <path stroke="#fff" strokeWidth="1.200" d="M14.500 11v4M14.500 8.800v1.200" />
        </svg>
        <svg viewBox="0 0 20 20" className="ml-[19px] size-5" fill="none" stroke="#fff" strokeWidth="1.300">
          <path d="M1 10A9 9 0 0 1 18.500 6M18.500 1v5h-5M1.500 19v-4.500h5M1.500 14.500A9 9 0 0 0 11 19" />
          <circle cx="15" cy="15" r="5" fill="#ff9800" stroke="none" />
        </svg>
        <div className="ml-[21px] w-[32px] pb-[2px] text-center leading-5 tracking-[-0.1px]">ENG<br />IN</div>
        <svg viewBox="0 0 20 15" className="ml-[21px] h-[15px] w-5" fill="none" stroke="#fff" strokeWidth="1.500">
          <path d="M.8 5.800a13 13 0 0 1 18.400 0M3.600 8.600a9 9 0 0 1 12.800 0M6.300 11.300a5.200 5.200 0 0 1 7.400 0" /><circle cx="10" cy="13" r="1.400" fill="#fff" stroke="none" />
        </svg>
        <svg viewBox="0 0 20 18" className="ml-[10px] h-[18px] w-5" fill="none" stroke="#fff" strokeWidth="1.300">
          <path strokeLinejoin="round" d="M.8 6.500h3L8.500 2v14l-4.700-4.500h-3ZM11 6.500a4 4 0 0 1 0 5" /><path stroke="#777" d="M13.500 4.300a7 7 0 0 1 0 9.400M16 2.200a10.500 10.500 0 0 1 0 13.600" />
        </svg>
        <svg viewBox="0 0 21 17" className="ml-[9px] h-[17px] w-[21px]" fill="none" stroke="#fff" strokeWidth="1.500">
          <path d="M8 5h8.500a2 2 0 0 1 2 2v6.500a2 2 0 0 1-2 2h-12a2 2 0 0 1-2-2V12" /><path strokeWidth="2" d="M20 8.500v3.500" /><path fill="#fff" stroke="none" d="M5 0 .5 7.500H3L2 13l5-7.500H4.500L6 0ZM4 14.500 8.500 9l-3 5.500Z" />
        </svg>
        <div className="ml-[21px] w-[78px] pb-[2px] text-right leading-5 tracking-[-0.05px] whitespace-nowrap">4:24 PM<br />10/10/2025</div>
      </div>
    </div>
  );
}

export default function App() {
  return (
    <div className="flex h-[1078px] w-[1918px] flex-col overflow-hidden bg-[#34262f] font-['Open_Sans','Noto_Sans',sans-serif]">
      <TabStrip />
      <div className="h-[101px] rounded-t-[10px] bg-[#4a3444]">
        <AddressBar />
        <BookmarksBar />
      </div>
      <div className="flex h-[869px] flex-col bg-[#f8fafd] font-['Inter','Roboto',sans-serif]">
        <Header />
        <div className="flex h-[789px]">
          <Sidebar />
          <div className="flex h-[769px] flex-1">
            <MailPane />
            <SidePanel />
          </div>
        </div>
      </div>
      <Taskbar />
    </div>
  );
}
